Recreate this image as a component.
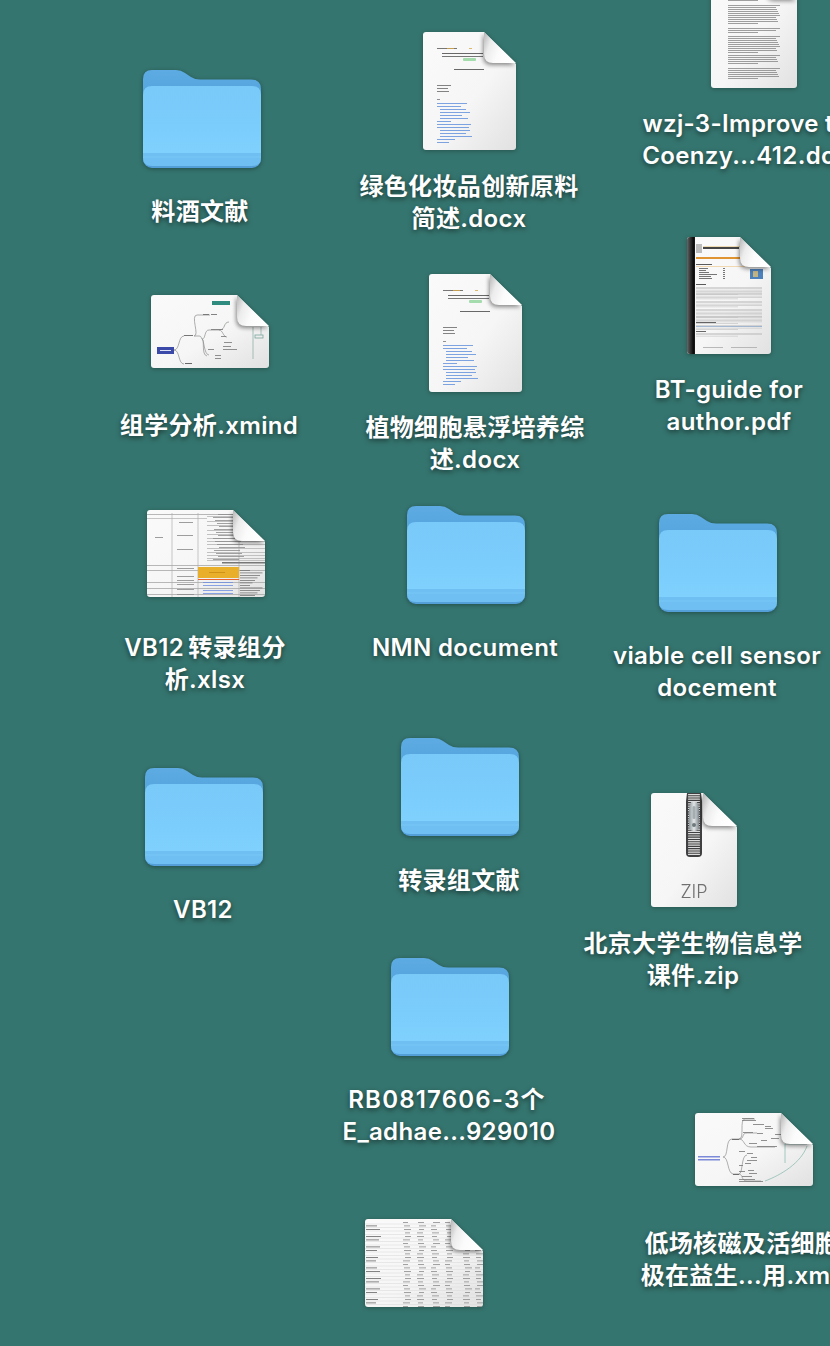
import React, { useId } from "react";

const ids = () => useId().replace(/[^a-zA-Z0-9]/g, "");

function Folder() {
  const id = ids();
  const bk = `${id}k`;
  return (
    <svg width="118" height="100" viewBox="0 0 118 100" className="block overflow-visible drop-shadow-[0_1px_2px_rgba(0,0,0,0.35)]">
      <defs>
        <linearGradient id={id} x1="0" y1="0" x2="0" y2="1">
          <stop offset="0" stopColor="#79c9f9" />
          <stop offset="0.6" stopColor="#7bcdfc" />
          <stop offset="1" stopColor="#80d1fd" />
        </linearGradient>
        <linearGradient id={bk} x1="0" y1="0" x2="0" y2="1">
          <stop offset="0" stopColor="#5dabe2" />
          <stop offset="1" stopColor="#4a9bd8" />
        </linearGradient>
      </defs>
      <path d="M0 10Q0 1 9 1H33Q38 1 42 4L48 8Q52 10.500 57 10.500H108Q118 10.500 118 20V60H0Z" fill={`url(#${bk})`} />
      <rect x="0" y="17" width="118" height="82" rx="9" fill="#559fd9" />
      <path d="M0 26Q0 17 9 17H109Q118 17 118 26V87H0Z" fill={`url(#${id})`} />
      <path d="M0 84H118V89Q118 97 109 97H9Q0 97 0 89Z" fill="#6fbff3" />
      <rect x="0" y="87.500" width="118" height="1" fill="#79c7f7" />
    </svg>
  );
}

function Page({ w, h, f = 32, children, plain }) {
  const base = ids();
  const r = 3;
  const body = `M${r} 0H${w - f}L${w} ${f}V${h - r}Q${w} ${h} ${w - r} ${h}H${r}Q0 ${h} 0 ${h - r}V${r}Q0 0 ${r} 0Z`;
  const fold = `M${w - f} 0L${w} ${f - 1}H${w - f + 9}Q${w - f} ${f - 1} ${w - f} ${f - 10}Z`;
  return (
    <svg width={w} height={h} viewBox={`0 0 ${w} ${h}`} className="block overflow-visible drop-shadow-[0_1px_2px_rgba(0,0,0,0.3)]">
      <defs>
        <linearGradient id={`${base}p`} x1="0" y1="0" x2="1" y2="1">
          <stop offset="0" stopColor="#fafafa" />
          <stop offset="0.55" stopColor="#f6f6f6" />
          <stop offset="1" stopColor="#e1e1e1" />
        </linearGradient>
        <linearGradient id={`${base}f`} x1="0" y1="0" x2="1" y2="0.35">
          <stop offset="0" stopColor="#b4b4b4" />
          <stop offset="0.28" stopColor="#ececec" />
          <stop offset="0.6" stopColor="#fbfbfb" />
          <stop offset="1" stopColor="#ffffff" />
        </linearGradient>
        <filter id={`${base}b`} x="-5%" y="-5%" width="110%" height="110%">
          <feGaussianBlur stdDeviation="0.6" />
        </filter>
        <filter id={`${base}s`} x="-40%" y="-40%" width="180%" height="180%">
          <feGaussianBlur stdDeviation="2" />
        </filter>
        <clipPath id={`${base}c`}>
          <path d={body} />
        </clipPath>
      </defs>
      <path d={body} fill={`url(#${base}p)`} />
      <g clipPath={`url(#${base}c)`}>
        <g filter={plain ? undefined : `url(#${base}b)`}>{children}</g>
        <path d={fold} transform="translate(-1 2)" fill="#000" opacity="0.45" filter={`url(#${base}s)`} />
      </g>
      <path d={fold} fill={`url(#${base}f)`} />
    </svg>
  );
}

const L = ({ x, y, w, c = "#8a8a8a", h = 0.8 }) => <rect x={x} y={y} width={w} height={h} fill={c} />;

function DocThumb() {
  const blue = [
    [14, 71, 30], [14, 74, 24], [17, 77, 26], [17, 80, 30], [17, 83, 22], [17, 86, 28], [14, 89, 14],
    [14, 92, 34], [14, 95, 32], [17, 98, 30], [17, 101, 26], [17, 104, 32], [14, 107, 18], [14, 110, 12],
  ];
  return (
    <>
      <L x={14} y={16} w={20} c="#555" />
      <L x={24} y={16} w={7} c="#d9a94a" />
      <L x={46} y={16} w={3} c="#d9a94a" />
      <L x={19} y={21} w={41} c="#444" />
      <L x={19} y={24} w={41} c="#555" />
      <rect x={40} y={26} width={13} height={3} rx={1} fill="#a5dcae" />
      <L x={31} y={37} w={30} c="#444" />
      <L x={14} y={53} w={14} c="#666" />
      <L x={14} y={56} w={11} c="#666" />
      <L x={14} y={59} w={12} c="#666" />
      <L x={14} y={67} w={3} c="#777" />
      {blue.map(([x, y, w], i) => (
        <L key={i} x={x} y={y} w={w} c="#5f8fdc" />
      ))}
    </>
  );
}

function ArticleThumb() {
  const rows = [];
  [[28, 4], [35, 20], [58, 5], [66, 17], [85, 10], [98, 12]].forEach(([start, len], b) => {
    for (let i = 0; i < len; i += 2) {
      rows.push(<L key={`${b}-${i}`} x={17} y={start + i} w={i + 2 >= len ? 30 : 52 - ((i * 7) % 5)} c="#777" h={0.7} />);
    }
  });
  return <g>{rows}</g>;
}

function MindA() {
  const s = "#8a8e8a";
  return (
    <>
      <rect x="6" y="52" width="17" height="7" fill="#3a4aa8" />
      <rect x="9" y="55" width="11" height="1" fill="#dde1f7" />
      <rect x="61" y="6" width="18" height="4" fill="#2d8b7d" />
      <path d="M23 55C29 55 27 41 33 41M23 55C29 55 27 69 33 69M43 41C49 41 39 20 46 20H59M43 41H48C51 41 50 44 51 44M51 44C55 44 53 35 58 35H68M68 35C75 35 72 27 78 27M68 35C72 35 72 42 76 42M51 44C53 44 53 60 58 60M51 44C54 44 50 60 56 61" fill="none" stroke={s} strokeWidth="0.7" />
      <L x={33} y={40} w={9} c="#555" />
      <L x={34} y={68} w={7} c="#444" />
      <L x={52} y={19} w={6} c="#666" />
      <L x={60} y={19} w={6} c="#666" />
      <L x={60} y={34} w={12} c="#777" />
      <L x={70} y={41} w={5} c="#777" />
      <L x={73} y={47} w={8} c="#777" />
      <L x={72} y={51} w={8} c="#777" />
      <L x={72} y={54} w={14} c="#777" />
      <L x={57} y={54} w={6} c="#777" />
      <L x={64} y={60} w={6} c="#777" />
      <L x={64} y={63} w={6} c="#777" />
      <rect x="104" y="40" width="8" height="3" fill="none" stroke="#78a69b" strokeWidth="0.8" />
      <path d="M102 32V64M110 32V40" stroke="#8fb0a9" strokeWidth="0.8" fill="none" />
    </>
  );
}

function MindB() {
  const s = "#8f8f8f";
  return (
    <>
      <rect x="3" y="43" width="22" height="1.500" fill="#7d8ad8" />
      <rect x="3" y="46" width="22" height="1.500" fill="#7d8ad8" />
      <path d="M28 44C34 44 30 26 37 26H44M44 26C50 26 44 6 50 6H60M44 26C50 26 46 20 52 20H62M44 26C50 26 48 34 56 34H80M28 44C34 44 32 60 38 61H44M44 61C48 61 46 42 52 42M44 61C48 61 46 68 52 68H66" fill="none" stroke={s} strokeWidth="0.7" />
      {[[47, 5, 12], [47, 7, 14], [58, 11, 11], [70, 13, 6], [70, 15, 8], [48, 19, 10], [62, 20, 6], [80, 21, 6], [76, 25, 8], [66, 27, 6], [54, 30, 8], [62, 33, 20], [44, 38, 6], [52, 40, 6], [56, 44, 6], [52, 47, 10], [50, 50, 6], [44, 52, 4], [44, 58, 6], [53, 57, 6], [54, 60, 8], [47, 63, 10], [44, 66, 16], [44, 68, 24]].map(([x, y, w], i) => (
        <L key={i} x={x} y={y} w={w} c="#777" />
      ))}
      <L x={37} y={26} w={7} c="#555" />
      <L x={38} y={61} w={6} c="#555" />
      <path d="M90 31H112M90 31V50M112 33C106 50 86 62 70 68" fill="none" stroke="#8fbcb2" strokeWidth="0.8" />
    </>
  );
}

function SheetA() {
  const rows = [];
  [6, 11, 15, 20, 24, 28, 31, 34, 38, 42, 45, 48, 50].forEach((y) => rows.push(<L key={y} x={60} y={y} w={60} c="#b5b5b5" />));
  for (let y = 4; y < 50; y += 3) rows.push(<L key={`t${y}`} x={66 + ((y * 3) % 7)} y={y} w={26} c="#8c8c8c" />);
  [55, 60, 72, 78, 84, 87].forEach((y) => rows.push(<L key={`g${y}`} x={0} y={y} w={118} c="#a8a8a8" />));
  for (let y = 60; y < 87; y += 2.5) rows.push(<L key={`r${y}`} x={93} y={y} w={10 + ((y * 5) % 15)} c="#777" />);
  return (
    <>
      <L x={0} y={4} w={118} c="#a8a8a8" />
      <L x={0} y={8} w={60} c="#bababa" />
      <rect x="92" y="0" width="26" height="3" fill="#666" />
      <path d="M25 3V87M51 3V87M92 8V87" stroke="#b0b0b0" strokeWidth="0.7" />
      {rows}
      <L x={8} y={27} w={8} c="#888" />
      <L x={32} y={12} w={14} c="#888" />
      <L x={30} y={25} w={16} c="#888" />
      <L x={30} y={39} w={16} c="#888" />
      <rect x="51" y="57" width="41" height="11" fill="#e9ae2c" />
      <rect x="51" y="69" width="41" height="1" fill="#e9642e" />
      <L x={62} y={62} w={16} c="#c98b14" />
      {[72, 75, 80, 83].map((y) => (
        <L key={y} x={56} y={y} w={30} c="#6f8fe0" />
      ))}
      {[58, 66, 70, 74, 79, 84].map((y) => (
        <L key={y} x={30} y={y} w={17} c="#888" />
      ))}
      <rect x="75" y="52" width="43" height="1.500" fill="#777" />
    </>
  );
}

function SheetB() {
  const rows = [];
  const cols = [38, 52, 66, 80, 98, 110];
  for (let y = 3; y < 88; y += 3.5) {
    rows.push(<L key={`l${y}`} x={0} y={y + 1.7} w={118} c="#dcdcdc" h={0.6} />);
    if (Math.round(y * 2) % 3 !== 0) rows.push(<L key={`a${y}`} x={1} y={y} w={10 + (Math.round(y) % 6)} c="#666" />);
    cols.forEach((c, i) => rows.push(<L key={`${y}-${i}`} x={c + (Math.round(y + i) % 3)} y={y} w={5 + (Math.round(y * 2 + i) % 3)} c="#8c8c8c" />));
  }
  return <>{rows}</>;
}

function PdfThumb() {
  const rows = [];
  [[50, 6], [56, 5], [64, 5], [72, 7], [79, 6], [88, 4], [96, 3]].forEach(([y, n], b) => {
    for (let i = 0; i < n; i++) rows.push(<L key={`${b}-${i}`} x={9} y={y + i * 1.4} w={i === n - 1 ? 42 : 66} c={b === 5 && i === 1 ? "#6f92bd" : "#c0c0c0"} h={0.6} />);
  });
  return (
    <>
      <defs>
        <linearGradient id="pdfspine" x1="0" x2="1" y1="0" y2="0">
          <stop offset="0" stopColor="#666" />
          <stop offset="0.5" stopColor="#2b2b2b" />
          <stop offset="0.9" stopColor="#050505" />
          <stop offset="1" stopColor="#333" />
        </linearGradient>
      </defs>
      <rect x="0" y="0" width="8" height="117" fill="url(#pdfspine)" />
      <rect x="9" y="7" width="6" height="9" fill="#bdbdbd" />
      <rect x="16" y="10" width="36" height="2" fill="#444" />
      <L x={16} y={9} w={60} c="#ecd4a4" />
      <rect x="9" y="20" width="47" height="2" fill="#e09430" />
      <L x={9} y={27} w={16} c="#333" />
      <L x={9} y={29} w={60} c="#efd0a0" />
      {[31, 33, 35, 37, 39, 41].map((y, i) => (
        <g key={y}>
          <L x={12} y={y} w={[9, 7, 10, 18, 12, 13][i]} c="#555" />
          <L x={36} y={y} w={2} c="#555" />
        </g>
      ))}
      <rect x="63" y="32" width="13" height="10" fill="#4e81bb" />
      <rect x="66" y="34" width="5" height="6" fill="#c2b383" />
      <L x={9} y={47} w={10} c="#333" />
      {rows}
      <L x={9} y={85} w={20} c="#444" />
      <L x={9} y={94} w={10} c="#444" />
      <L x={16} y={110} w={20} c="#aaa" />
      <L x={44} y={110} w={26} c="#aaa" />
    </>
  );
}

function ZipThumb() {
  const teeth = [];
  for (let y = 1; y < 61; y += 2.3) {
    teeth.push(<rect key={y} x={37} y={y} width={12} height={1.2} rx={0.5} fill="#dcdcdc" />);
  }
  return (
    <>
      <defs>
        <linearGradient id="zippull" x1="0" x2="1" y1="0" y2="0">
          <stop offset="0" stopColor="#8f9a9e" />
          <stop offset="0.5" stopColor="#e3e6e8" />
          <stop offset="1" stopColor="#7f8a8e" />
        </linearGradient>
      </defs>
      <path d="M36 0H50L51 8V60Q51 64 47 64H39Q35 64 35 60V8Z" fill="#404042" />
      {teeth}
      <path d="M40 9H46L48 16V33Q48 38 43 38Q38 38 38 33V16Z" fill="url(#zippull)" />
      <rect x="41.500" y="13" width="3" height="13" rx="1.500" fill="#a5adb0" />
      <circle cx="43" cy="32" r="2" fill="#6f797d" />
      <text x="43" y="105" textAnchor="middle" fontSize="18" fontFamily="Inter, 'Liberation Sans', sans-serif" fontWeight="300" fill="#707070">ZIP</text>
    </>
  );
}

function Item({ x, y, cx, ly, lines, children }) {
  return (
    <>
      <div className="absolute" style={{ left: x, top: y }}>{children}</div>
      {lines && (
        <div
          className="absolute -translate-x-1/2 whitespace-nowrap text-center text-[24px] leading-[32px] font-semibold tracking-[0.35px] text-white [text-shadow:0_2px_5px_rgba(0,0,0,0.55)] [font-family:Inter,'Noto_Sans_CJK_SC',sans-serif]"
          style={{ left: cx, top: ly }}
        >
          {lines.map((t, i) => <div key={i}>{t}</div>)}
        </div>
      )}
    </>
  );
}

export default function App() {
  return (
    <div className="relative w-[830px] h-[1346px] overflow-hidden bg-[#35756f]">
      <Item x={143} y={69} cx={200} ly={196} lines={["料酒文献"]}><Folder /></Item>
      <Item x={423} y={32} cx={469} ly={171} lines={["绿色化妆品创新原料", "简述.docx"]}><Page w={93} h={118}><DocThumb /></Page></Item>
      <Item x={711} y={-30} cx={753} ly={108} lines={["wzj-3-Improve the", "Coenzy...412.docx"]}><Page w={86} h={118} f={30}><ArticleThumb /></Page></Item>
      <Item x={151} y={295} cx={209} ly={410} lines={["组学分析.xmind"]}><Page w={118} h={73}><MindA /></Page></Item>
      <Item x={429} y={274} cx={475} ly={412} lines={["植物细胞悬浮培养综", "述.docx"]}><Page w={93} h={118}><DocThumb /></Page></Item>
      <Item x={687} y={237} cx={729} ly={374} lines={["BT-guide for", "author.pdf"]}><Page w={84} h={117} f={31}><PdfThumb /></Page></Item>
      <Item x={147} y={510} cx={205} ly={632} lines={["VB12\u2009转录组分", "析.xlsx"]}><Page w={118} h={87}><SheetA /></Page></Item>
      <Item x={407} y={505} cx={465} ly={632} lines={["NMN document"]}><Folder /></Item>
      <Item x={659} y={513} cx={717} ly={640} lines={["viable cell sensor", "docement"]}><Folder /></Item>
      <Item x={145} y={767} cx={203} ly={894} lines={["VB12"]}><Folder /></Item>
      <Item x={401} y={737} cx={459} ly={865} lines={["转录组文献"]}><Folder /></Item>
      <Item x={651} y={793} cx={693} ly={928} lines={["北京大学生物信息学", "课件.zip"]}><Page w={86} h={114} f={34} plain><ZipThumb /></Page></Item>
      <Item x={391} y={957} cx={447} ly={1084} lines={[<span className="tracking-[1.2px]">RB0817606-3个</span>, <span className="relative left-[2px]">E_adhae...929010</span>]}><Folder /></Item>
      <Item x={695} y={1113} cx={754} ly={1228} lines={["低场核磁及活细胞电", "极在益生...用.xmind"]}><Page w={118} h={73}><MindB /></Page></Item>
      <Item x={365} y={1219} cx={424}><Page w={118} h={88}><SheetB /></Page></Item>
    </div>
  );
}
